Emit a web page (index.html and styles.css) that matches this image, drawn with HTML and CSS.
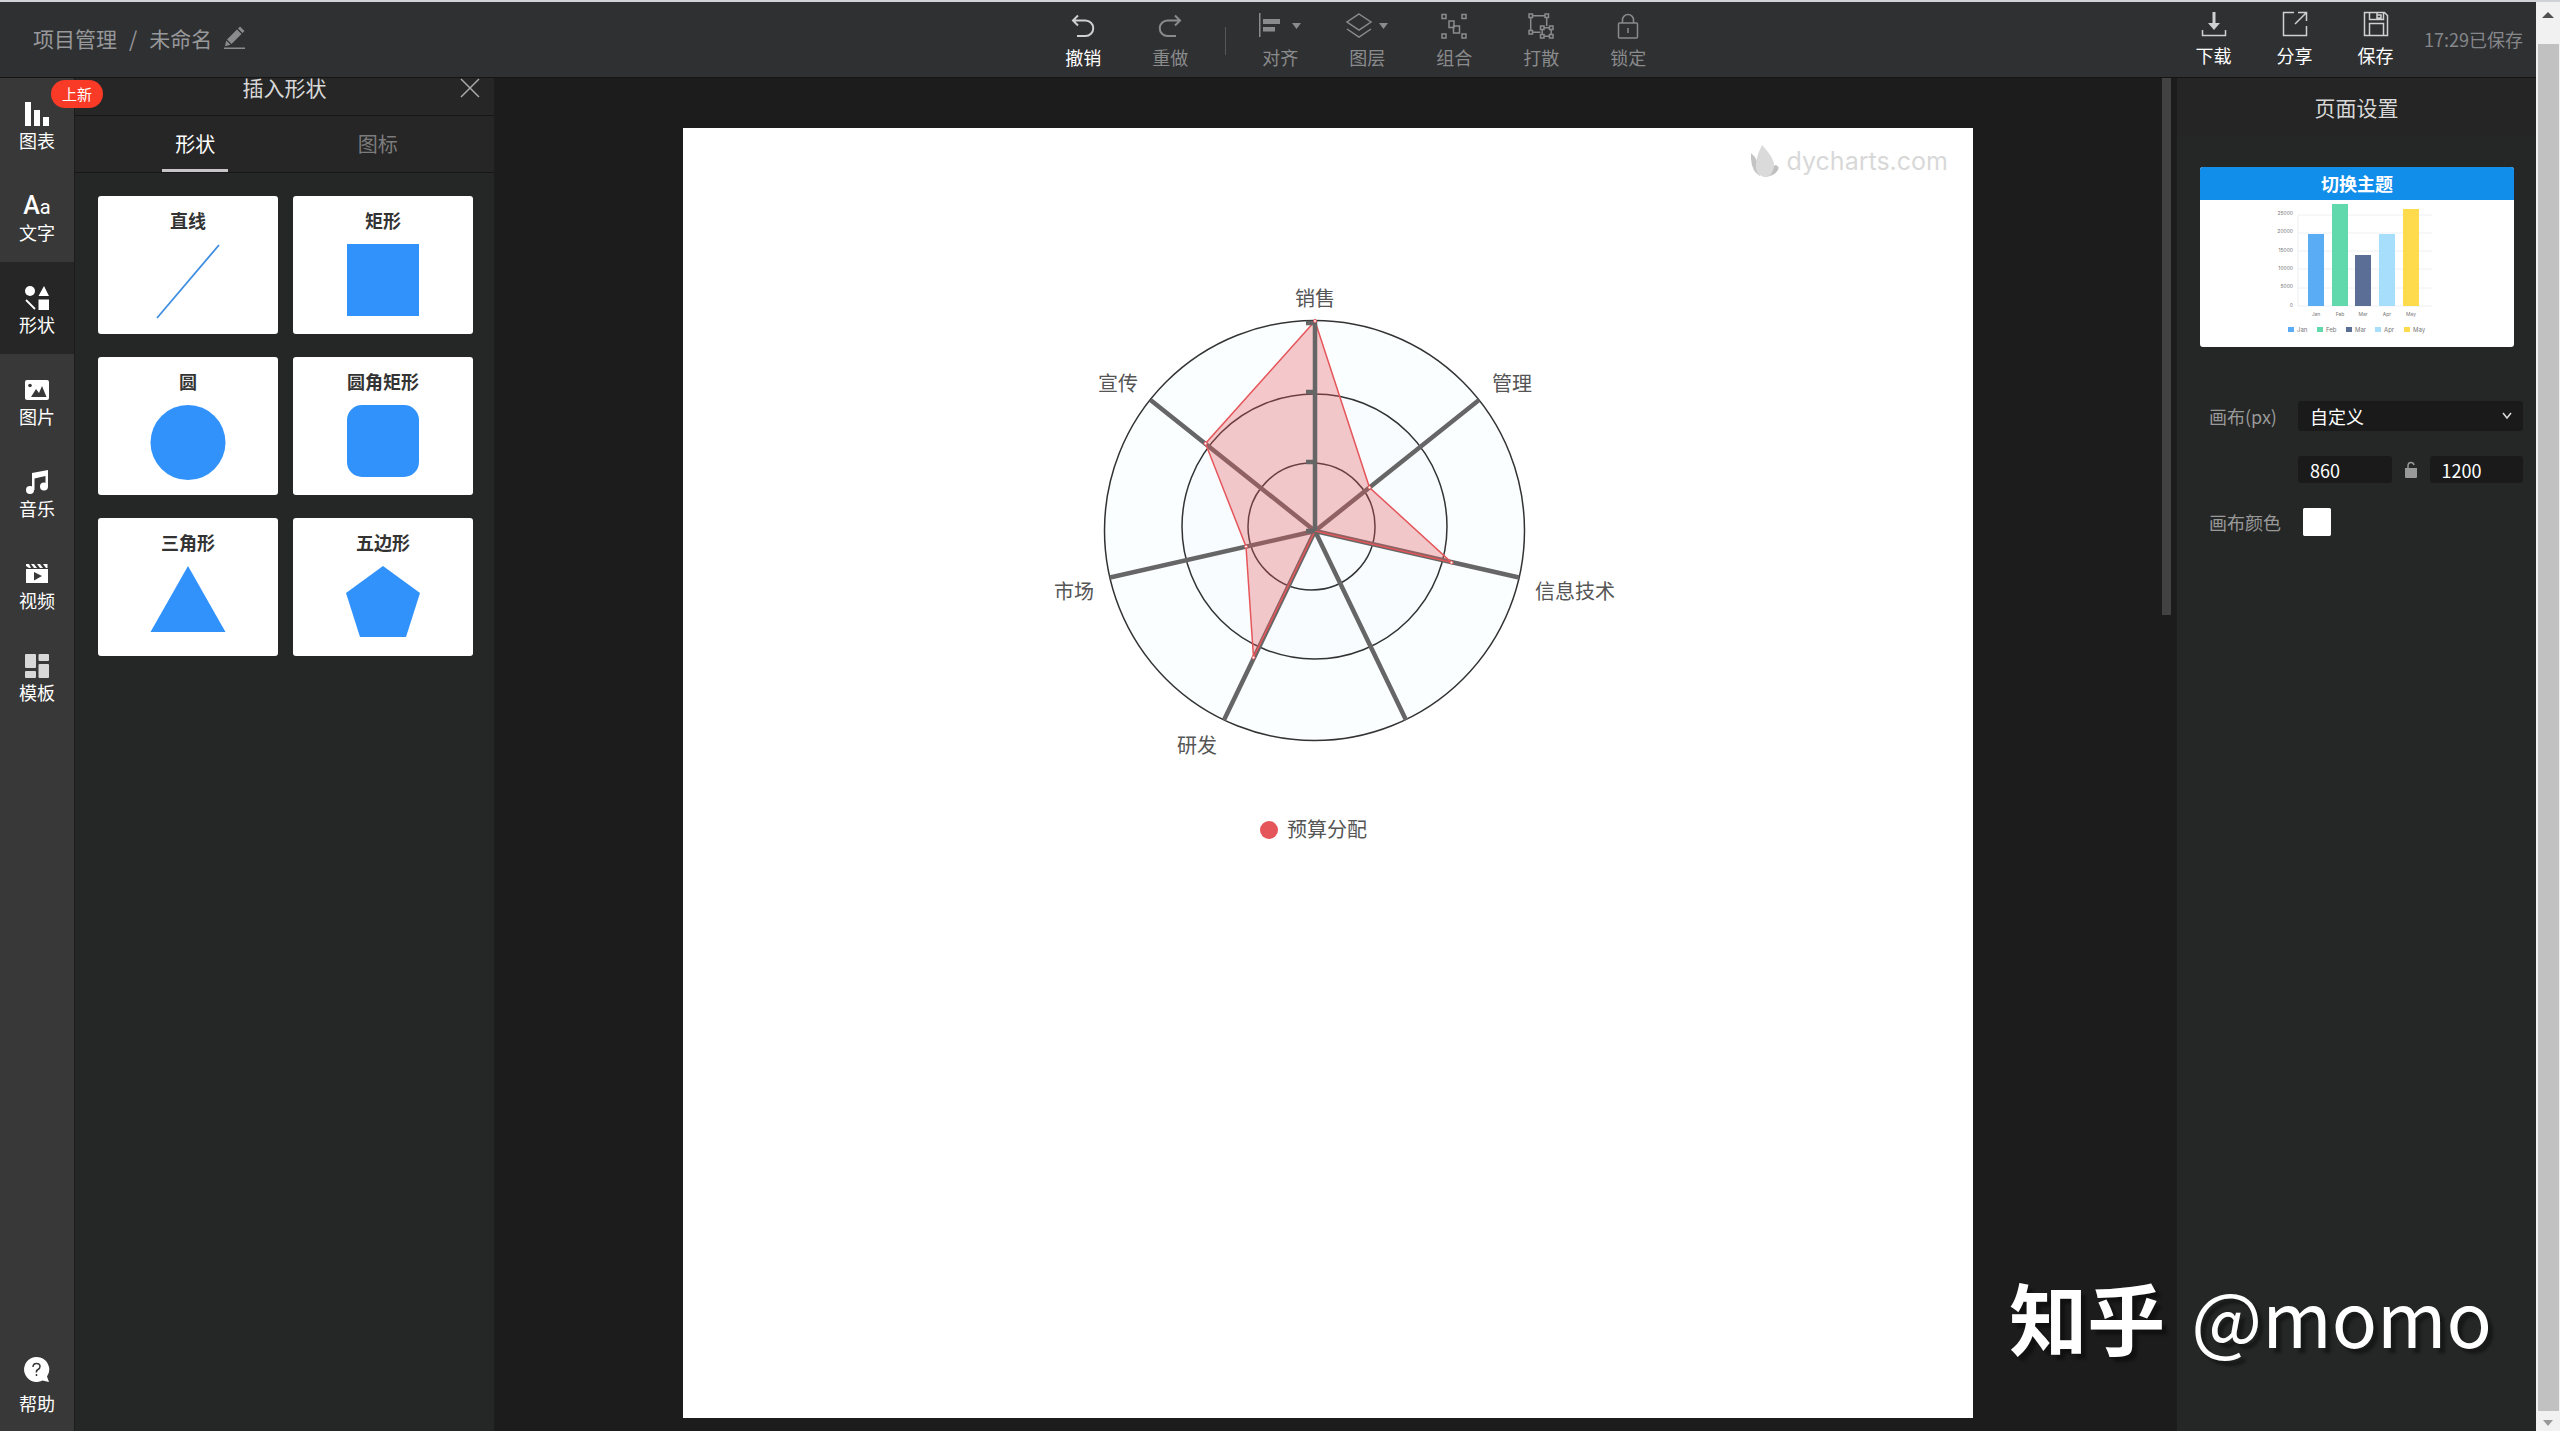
FILE: index.html
```
<!DOCTYPE html>
<html lang="zh-CN">
<head>
  <meta charset="UTF-8" />
  <title>未命名 - 项目管理</title>
  <link rel="stylesheet" href="styles.css">
</head>
<body>
  <div class="app">
    <header class="header">
      <nav class="crumbs">
        <a href="#">项目管理</a>
        <span>/</span>
        <span class="doc-name">未命名</span>
        <button class="icon-btn" aria-label="重命名">
          <svg width="22" height="24" viewBox="0 0 22 24" fill="#8a8b8c"><path d="M3 13.500 13 3.500l4.500 4.500-10 10zM14 2.500l2-2 4.500 4.500-2 2zM2.200 14.500l4.300 4.300-5.500 1.500zM0 21.500h21v1.500H0z"/></svg>
        </button>
      </nav>

      <div class="toolbar">
        <button class="tool on">
          <svg width="26" height="26" viewBox="0 0 26 26" fill="none" stroke="currentColor" stroke-width="2"><path d="M8 2.500 3 7.500l5 5M3 7.500h12.500a7.500 7.500 0 0 1 0 15.500H7"/></svg>
          撤销
        </button>
        <button class="tool">
          <svg width="26" height="26" viewBox="0 0 26 26" fill="none" stroke="currentColor" stroke-width="2"><path d="m18 2.500 5 5-5 5M23 7.500H10.500a7.500 7.500 0 0 0 0 15.500H19"/></svg>
          重做
        </button>
        <span class="divider"></span>
        <button class="tool">
          <svg width="44" height="26" viewBox="0 0 44 26" fill="currentColor"><path d="M1 0h1.500v24H1zM5 6h17v5H5zM5 14h12v4.500H5zM34 10h9l-4.500 6z"/></svg>
          对齐
        </button>
        <button class="tool">
          <svg width="44" height="26" viewBox="0 0 44 26" fill="none" stroke="currentColor" stroke-width="1.500"><path d="m14 1 12 8-12 8L2 9zM2 16l12 8 12-8"/><path d="M34 10h9l-4.500 6z" fill="currentColor" stroke="none"/></svg>
          图层
        </button>
        <button class="tool">
          <svg width="26" height="26" viewBox="0 0 26 26" fill="none" stroke="currentColor" stroke-width="1.500"><path d="M1 1.500h4v4H1zM21 1.500h4v4h-4zM1 21h4v4H1zM21 21h4v4h-4zM8 8h5v6.500H8zM12.500 13h6v7h-6z"/></svg>
          组合
        </button>
        <button class="tool">
          <svg width="26" height="26" viewBox="0 0 26 26" fill="none" stroke="currentColor" stroke-width="1.500"><path d="M1 1h3.500v3.500H1zM17 1h3.500v3.500H17zM1 17.500h3.500V21H1zM12.500 13H16v3.500h-3.500zM21.500 13H25v3.500h-3.500zM12.500 21.500H16V25h-3.500zM21.500 21.500H25V25h-3.500zM4.500 2.700H17M2.700 4.500v13M18.700 4.500V13M4.500 19.200h8M16 14.700h5.500M16 23.200h5.500M14.200 16.500v5M23.200 16.500v5"/></svg>
          打散
        </button>
        <button class="tool">
          <svg width="26" height="26" viewBox="0 0 26 26" fill="none" stroke="currentColor" stroke-width="1.500"><rect x="3.500" y="10" width="19" height="15" rx="1"/><path d="M7.500 10V7a5.500 5.500 0 0 1 11 0v3M13 15v5"/></svg>
          锁定
        </button>
      </div>

      <div class="actions">
        <button class="tool on">
          <svg width="26" height="26" viewBox="0 0 26 26" fill="none" stroke="#d0d0d0" stroke-width="2"><path d="M1.500 19v5.500h23V19" stroke-width="1.500"/><path d="M13 1v12" stroke-width="3"/><path d="M7 12h12l-6 7z" fill="#d0d0d0" stroke="none"/></svg>
          下载
        </button>
        <button class="tool on">
          <svg width="26" height="26" viewBox="0 0 26 26" fill="none" stroke="#d0d0d0" stroke-width="1.500"><path d="M12 1.500H1.500v23h23V15M16 1.500h8.500V10M24 2 13 13"/></svg>
          分享
        </button>
        <button class="tool on">
          <svg width="26" height="26" viewBox="0 0 26 26" fill="none" stroke="#d0d0d0" stroke-width="1.500"><path d="M1.500 1.500h20l3 3v20h-23zM6.500 1.500v7h14v-7M14 4h4v3h-4V2M6.500 24.500v-12h14v12"/></svg>
          保存
        </button>
        <span class="saved">17:29已保存</span>
      </div>
    </header>

    <main class="main">
      <nav class="rail">
        <button class="rail-item">
          <svg width="24" height="24" viewBox="0 0 24 24" fill="#fff"><path d="M0 0h6v24H0zM9 8h6v16H9zM18 15h6v9h-6z"/></svg>
          图表
          <span class="badge">上新</span>
        </button>
        <button class="rail-item">
          <span class="aa">A<small>a</small></span>
          文字
        </button>
        <button class="rail-item active">
          <svg width="24" height="24" viewBox="0 0 24 24" fill="#fff"><circle cx="5" cy="5" r="5"/><path d="m19 0 5 10H13.500zM13.500 13.500H24V24H13.500z"/><path d="m1 14 9 9" stroke="#fff" stroke-width="1.800"/></svg>
          形状
        </button>
        <button class="rail-item">
          <svg width="24" height="24" viewBox="0 0 24 24"><rect y="2" width="24" height="20" rx="2" fill="#fff"/><circle cx="5" cy="7.500" r="1.800" fill="#383838"/><path d="M6 19l5-8 3 4 3-7 4.500 11z" fill="#383838"/></svg>
          图片
        </button>
        <button class="rail-item">
          <svg width="24" height="24" viewBox="0 0 24 24" fill="#fff"><path d="M7 3 23 0v17h-2.500V6L9.500 8.500V20H7z"/><circle cx="5" cy="20" r="4"/><circle cx="19" cy="16.500" r="4"/></svg>
          音乐
        </button>
        <button class="rail-item">
          <svg width="24" height="24" viewBox="0 0 24 24"><path d="M1 2h3l2 4H4L1 4zM6 2h3l3 4H9zM12 2h3l3 4h-3zM18 2h4.500v4H21zM1 7h22v14H1z" fill="#fff"/><path d="M9 10l8 4-8 4.500z" fill="#383838"/></svg>
          视频
        </button>
        <button class="rail-item">
          <svg width="24" height="24" viewBox="0 0 24 24" fill="#d8d8d8"><rect width="11" height="14" rx="1"/><rect y="17" width="11" height="7" rx="1"/><rect x="13.500" width="10.500" height="7" rx="1"/><rect x="13.500" y="10" width="10.500" height="14" rx="1"/></svg>
          模板
        </button>
        <button class="rail-item help">
          <svg width="26" height="26" viewBox="0 0 26 26"><path d="M12.500 0a12.500 12.500 0 1 0 6 23.500l6.500 1.500-2-5.500A12.500 12.500 0 0 0 12.500 0z" fill="#fff"/><path d="M9 10q0-3.500 3.500-3.500T16 9.500q0 2-2 3t-1.500 3M12.500 17v2" fill="none" stroke="#383838" stroke-width="1.500"/></svg>
          帮助
        </button>
      </nav>

      <aside class="panel">
        <div class="panel-title">
          <h2>插入形状</h2>
          <button class="icon-btn close" aria-label="关闭">
            <svg width="20" height="20" viewBox="0 0 20 20" stroke="#aaa" stroke-width="1.500"><path d="m1 1 18 18M19 1 1 19"/></svg>
          </button>
        </div>
        <div class="tabs">
          <button class="tab active">形状</button>
          <button class="tab">图标</button>
        </div>
        <div class="shapes">
          <button class="shape">直线
            <svg width="76" height="76" viewBox="0 0 76 76"><path d="M7 74 69 1" stroke="#3f8fe0" stroke-width="1.800"/></svg>
          </button>
          <button class="shape">矩形
            <svg width="76" height="76" viewBox="0 0 76 76" fill="#3192fb"><path d="M2 0h72v72H2z"/></svg>
          </button>
          <button class="shape">圆
            <svg width="76" height="76" viewBox="0 0 76 76" fill="#3192fb"><circle cx="38" cy="37.500" r="37.500"/></svg>
          </button>
          <button class="shape">圆角矩形
            <svg width="76" height="76" viewBox="0 0 76 76" fill="#3192fb"><rect x="2" width="72" height="72" rx="15"/></svg>
          </button>
          <button class="shape">三角形
            <svg width="76" height="76" viewBox="0 0 76 76" fill="#3192fb"><path d="m38 0 37.500 66H.5z"/></svg>
          </button>
          <button class="shape">五边形
            <svg width="76" height="76" viewBox="0 0 76 76" fill="#3192fb"><path d="m38 0 37 27-14 44H15L1 27z"/></svg>
          </button>
        </div>
      </aside>

      <section class="workspace">
        <div class="canvas">
          <div class="brand">
            <svg width="28" height="32" viewBox="0 0 28 32"><path d="M0 8q8 6 9 23Q-1 26 0 8z" fill="#c4c4c4"/><path d="M24 20q5 1 3 5-4 7-15 7z" fill="#c0c0c0"/><path d="M11 0q13 14 12 21-1 10-9 11-8-1-9-9-1-9 6-23z" fill="#dadada"/></svg>
            dycharts.com
          </div>

          <svg class="chart" width="620" height="600" viewBox="0 0 620 600">
            <circle class="ring" cx="275.500" cy="260.500" r="210"/>
            <circle class="ring tint" cx="275.500" cy="256.500" r="132.500"/>
            <circle class="ring tint" cx="272.500" cy="256.500" r="63.500"/>
            <g class="axis">
              <path d="M276 261 440 130M276 261 480 307.500M276 261 367 450M276 261 185 450M276 261 71 307.500M276 261 111.500 130"/>
            </g>
            <path class="area" d="M276 51 330.500 217.500 412.500 292.500 276 261 214.500 387.500 207 276.500 166.500 173.500z"/>
            <g class="axis">
              <path d="M276 261V51M276 53h-9M276 122h-9M276 192h-9M276 261h-9"/>
            </g>
            <g class="dots">
              <circle cx="276" cy="51" r="1.500"/>
              <circle cx="330.500" cy="217.500" r="1.500"/>
              <circle cx="412.500" cy="292.500" r="1.500"/>
              <circle cx="214.500" cy="387.500" r="1.500"/>
              <circle cx="207" cy="276.500" r="1.500"/>
              <circle cx="166.500" cy="173.500" r="1.500"/>
            </g>
            <g class="labels">
              <text x="276" y="36" text-anchor="middle">销售</text>
              <text x="453" y="121">管理</text>
              <text x="496" y="329">信息技术</text>
              <text x="178" y="483" text-anchor="end">研发</text>
              <text x="55" y="329" text-anchor="end">市场</text>
              <text x="99" y="121" text-anchor="end">宣传</text>
              <text x="248" y="567">预算分配</text>
            </g>
            <circle cx="230" cy="560" r="9" fill="#e5565a"/>
          </svg>
        </div>
        <div class="thumb"></div>
      </section>

      <aside class="settings">
        <h2>页面设置</h2>
        <button class="theme">
          <span class="theme-title">切换主题</span>
          <svg width="314" height="147" viewBox="0 0 314 147">
            <path d="M98 15h134M98 33h134M98 51h134M98 69h134M98 88h134M98 106h134M98 15v91" stroke="#eef0f2" fill="none"/>
            <path d="M108 34h16v72h-16z" fill="#5aadf5"/>
            <path d="M132 4h16v102h-16z" fill="#62d9ad"/>
            <path d="M155 55h16v51h-16z" fill="#5b6e96"/>
            <path d="M179 34h16v72h-16z" fill="#a6defc"/>
            <path d="M203 9h16v97h-16z" fill="#fddb4c"/>
            <g class="tiny" text-anchor="end">
              <text x="93" y="15">25000</text>
              <text x="93" y="33">20000</text>
              <text x="93" y="52">15000</text>
              <text x="93" y="70">10000</text>
              <text x="93" y="88">5000</text>
              <text x="93" y="107">0</text>
            </g>
            <g class="tiny" text-anchor="middle">
              <text x="116" y="116">Jan</text>
              <text x="140" y="116">Feb</text>
              <text x="163" y="116">Mar</text>
              <text x="187" y="116">Apr</text>
              <text x="211" y="116">May</text>
            </g>
            <path d="M88 127h6v5h-6z" fill="#5aadf5"/>
            <path d="M117 127h6v5h-6z" fill="#62d9ad"/>
            <path d="M146 127h6v5h-6z" fill="#5b6e96"/>
            <path d="M175 127h6v5h-6z" fill="#a6defc"/>
            <path d="M204 127h6v5h-6z" fill="#fddb4c"/>
            <g class="tiny legend">
              <text x="97" y="132">Jan</text>
              <text x="126" y="132">Feb</text>
              <text x="155" y="132">Mar</text>
              <text x="184" y="132">Apr</text>
              <text x="213" y="132">May</text>
            </g>
          </svg>
        </button>

        <form class="form">
          <label for="size">画布(px)</label>
          <select id="size"><option>自定义</option></select>
          <div class="size-row">
            <input type="text" value="860" aria-label="宽度">
            <svg width="14" height="18" viewBox="0 0 14 18"><path d="M1 7h12v9q0 1-1 1H2q-1 0-1-1z" fill="#999"/><path d="M4 8V5q0-3.500 3-3.500 2.500 0 3 2.500" fill="none" stroke="#999" stroke-width="1.500"/></svg>
            <input type="text" value="1200" aria-label="高度">
          </div>
          <label for="color">画布颜色</label>
          <input id="color" type="color" value="#ffffff">
        </form>
      </aside>
    </main>
  </div>

  <div class="scrollbar">
    <svg width="12" height="42" viewBox="0 0 12 42"><path d="M0 16h12l-6-6z" fill="#505050"/></svg>
    <div class="scroll-thumb"></div>
    <svg width="12" height="20" viewBox="0 0 12 20"><path d="M1 9h10l-5 6z" fill="#999"/></svg>
  </div>

  <div class="watermark"><strong>知乎</strong><span>@momo</span></div>
</body>
</html>
```
FILE: styles.css
```
* { margin: 0; padding: 0; box-sizing: border-box; }

body {
  display: flex;
  height: 100vh;
  overflow: hidden;
  background: #1c1c1c;
  border-top: 2px solid #cfd2d6;
  font-family: "Noto Sans CJK SC", sans-serif;
  font-size: 18px;
  line-height: 24px;
  color: #999;
}

button {
  background: none;
  border: none;
  font: inherit;
  color: inherit;
  cursor: pointer;
}

svg { display: block; }

.app {
  flex: 1;
  min-width: 0;
  display: flex;
  flex-direction: column;
}

/* Header */
.header {
  display: grid;
  grid-template-columns: 41% auto 1fr;
  height: 76px;
  background: #2f3032;
  border-bottom: 1px solid #151515;
}

.crumbs {
  display: flex;
  align-items: center;
  gap: 12px;
  padding: 0 0 4px 33px;
  font-size: 21px;
  color: #97989a;
}

.crumbs a {
  color: inherit;
  text-decoration: none;
}

.toolbar {
  display: flex;
  align-items: center;
  padding-top: 2px;
}

.tool {
  display: flex;
  flex-direction: column;
  align-items: center;
  gap: 6px;
  width: 87px;
  color: #8a8b8c;
}

.tool.on { color: #fff; }
.toolbar .on svg { color: #d0d0d0; }

.divider {
  width: 1px;
  height: 28px;
  margin: 0 11px;
  background: #55575a;
}

.actions {
  display: flex;
  align-items: center;
  justify-content: flex-end;
  padding: 0 13px 2px 0;
}

.actions .tool { width: 81px; }

.saved {
  margin-left: 8px;
  color: #85868a;
}

/* Left rail */
.main {
  flex: 1;
  min-height: 0;
  display: flex;
}

.rail {
  display: flex;
  flex-direction: column;
  width: 75px;
  background: #383838;
  border-right: 1px solid #1c1c1c;
}

.rail-item {
  position: relative;
  display: flex;
  flex-direction: column;
  align-items: center;
  gap: 2px;
  height: 92px;
  padding-top: 24px;
  color: #fff;
}

.rail-item.active { background: #262626; }

.aa {
  height: 24px;
  font-family: Roboto, sans-serif;
  font-size: 25px;
  font-weight: 500;
}

.aa small { font-size: 20px; font-weight: 400; }

.help {
  gap: 8px;
  height: auto;
  margin-top: auto;
  padding: 0 0 16px;
}

.badge {
  position: absolute;
  left: 51px;
  top: 2px;
  z-index: 2;
  padding: 2px 11px;
  border-radius: 14px;
  background: #f93a26;
  font-size: 15px;
  white-space: nowrap;
}

/* Shape panel */
.panel {
  width: 419px;
  background: #252726;
}

.panel-title {
  display: flex;
  justify-content: center;
  height: 38px;
  background: #262626;
  border-bottom: 1px solid #171717;
}

h2 {
  font-size: 21px;
  font-weight: 400;
  color: #d8d8d8;
}

.panel-title h2 { line-height: 18px; }

.close {
  position: absolute;
  left: 460px;
}

.tabs {
  display: flex;
  height: 57px;
  padding: 0 25px 0 29px;
  background: #262626;
  border-bottom: 1px solid #171717;
}

.tab {
  flex: 1;
  font-size: 20px;
  color: #7c7c7c;
}

.tab.active {
  color: #fff;
  background: linear-gradient(#c8c4c8, #c8c4c8) center bottom / 66px 3px no-repeat;
}

.shapes {
  display: grid;
  grid-template-columns: 1fr 1fr;
  gap: 23px 15px;
  padding: 23px 21px 0 23px;
}

.shape {
  display: flex;
  flex-direction: column;
  align-items: center;
  gap: 12px;
  height: 138px;
  padding-top: 12px;
  border-radius: 3px;
  background: #fff;
  font-weight: 700;
  color: #333;
}

/* Canvas */
.workspace {
  flex: 1;
  display: flex;
  background: #1c1c1c;
}

.canvas {
  position: relative;
  flex: 1;
  max-width: 1290px;
  margin: 50px auto 13px;
  background: #fff;
}

.thumb {
  width: 9px;
  height: 537px;
  margin-right: 6px;
  background: #424242;
}

.brand {
  display: flex;
  align-items: center;
  justify-content: flex-end;
  gap: 8px;
  padding: 17px 25px;
  font-family: Inter, sans-serif;
  font-size: 25px;
  line-height: 32px;
  color: #d8d8d8;
}

.chart {
  position: absolute;
  left: 356px;
  top: 142px;
}

.ring { fill: #fbfeff; stroke: #333; stroke-width: 1.5; }
.tint { fill: #f8fcff; }
.axis { fill: none; stroke: #666; stroke-width: 4.5; }
.area { fill: rgba(229, 86, 90, 0.32); stroke: #e5565a; stroke-width: 1.5; }
.dots { fill: #fff; stroke: #e5565a; }
.labels { font-size: 20px; fill: #555; }

/* Page settings */
.settings {
  width: 359px;
  background: #252726;
}

.settings h2 {
  height: 58px;
  line-height: 58px;
  text-align: center;
  background: #242524;
}

.theme {
  display: block;
  width: 314px;
  margin: 31px 22px 0 23px;
  border-radius: 3px;
  overflow: hidden;
  background: #fff;
}

.theme-title {
  display: block;
  background: #118dea;
  line-height: 33px;
  font-weight: 700;
  color: #fff;
}

.tiny {
  font-family: Inter, sans-serif;
  font-size: 5px;
  fill: #777;
}

.legend { font-size: 6px; }

.form {
  display: grid;
  grid-template-columns: 89px 1fr;
  row-gap: 25px;
  align-items: center;
  padding: 54px 13px 0 32px;
}

select,
.size-row input {
  width: 100%;
  height: 30px;
  padding: 0 12px;
  border: none;
  border-radius: 3px;
  background: #1a1a1a;
  font: inherit;
  color: #fff;
}

select {
  appearance: none;
  background: #1a1a1a url("data:image/svg+xml,%3Csvg xmlns='http://www.w3.org/2000/svg' width='10' height='8' fill='none' stroke='%23ddd' stroke-width='1.500'%3E%3Cpath d='m1 1 4 5 4-5'/%3E%3C/svg%3E") right 11px center no-repeat;
}

.size-row {
  grid-column: 2;
  display: flex;
  align-items: center;
  gap: 12px;
}

.size-row input {
  flex: 1;
  min-width: 0;
  height: 27px;
}

input[type="color"] {
  appearance: none;
  width: 28px;
  height: 28px;
  margin-left: 5px;
  border: none;
  border-radius: 2px;
  background: #fff;
}

input[type="color"]::-webkit-color-swatch-wrapper { padding: 0; }
input[type="color"]::-webkit-color-swatch { border: none; border-radius: 2px; }

/* Page scrollbar */
.scrollbar {
  display: flex;
  flex-direction: column;
  align-items: center;
  width: 24px;
  background: #f1f1f1;
}

.scroll-thumb {
  flex: 1;
  width: 21px;
  background: #c1c1c1;
}

.watermark {
  position: absolute;
  right: 68px;
  bottom: 59px;
  display: flex;
  gap: 26px;
  font-size: 75px;
  line-height: 112px;
  color: #fff;
  text-shadow: 5px 5px 3px rgba(0, 0, 0, 0.4);
}

.watermark strong { font-size: 78px; }
```
